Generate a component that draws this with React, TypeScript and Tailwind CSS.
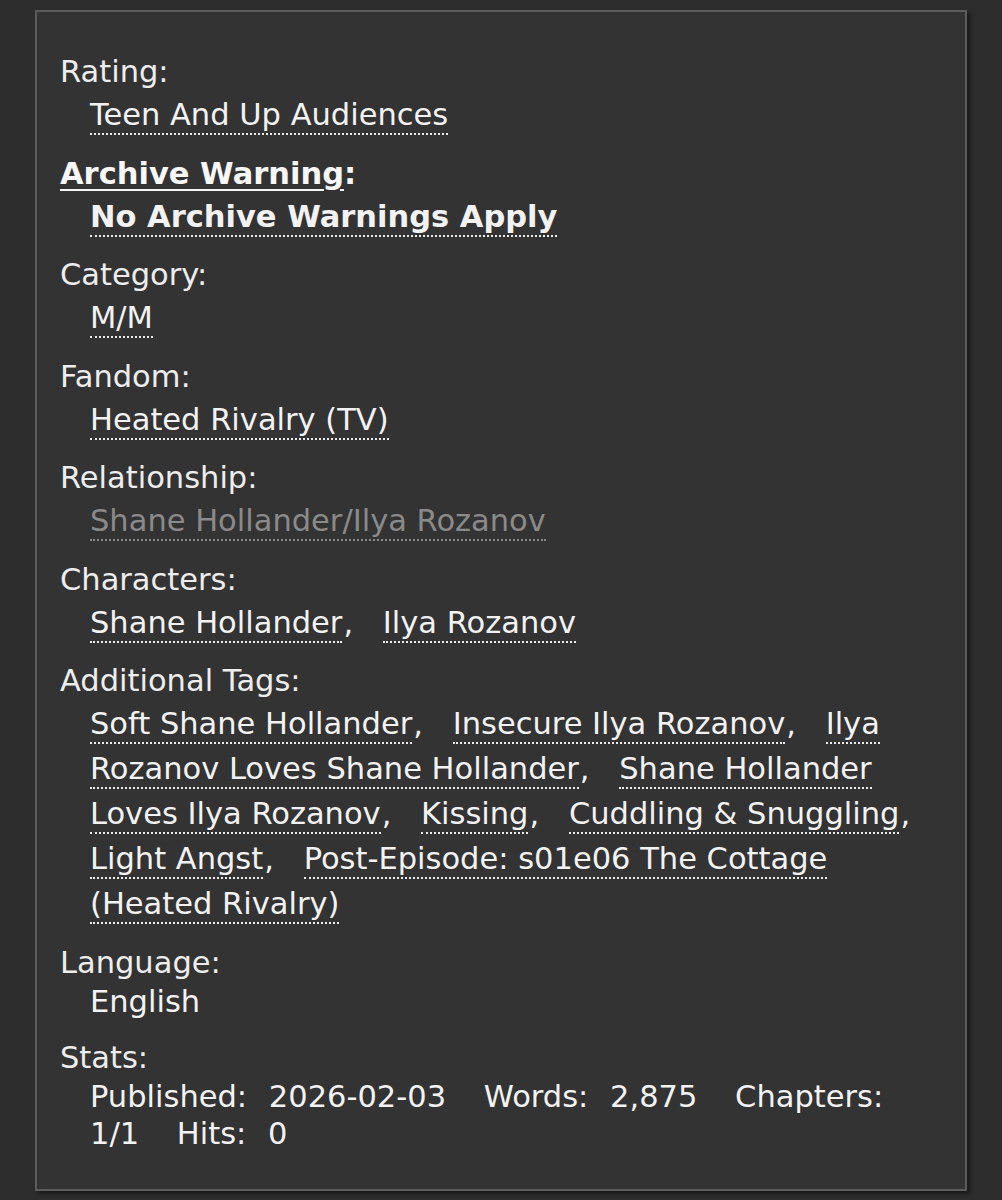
import React from "react";

const font = { fontFamily: '"DejaVu Sans", Verdana, sans-serif' };

function Tag({ children, gray = false, bold = false }: { children: React.ReactNode; gray?: boolean; bold?: boolean }) {
  return (
    <span
      className={
        "border-b-2 border-dotted pb-[1px] " +
        (gray ? "text-[#8a8a8a] border-[#8a8a8a] " : "text-[#f2f2f2] border-[#ececec] ") +
        (bold ? "font-bold" : "")
      }
    >
      {children}
    </span>
  );
}

function TagList({ items }: { items: string[] }) {
  return (
    <>
      {items.map((t, i) => (
        <React.Fragment key={i}>
          <Tag>{t}</Tag>
          {i < items.length - 1 ? <span className="ml-[1px] mr-[20px]">,</span> : null}{" "}
        </React.Fragment>
      ))}
    </>
  );
}

function Label({ children }: { children: React.ReactNode }) {
  return <div className="leading-[40px] text-[#ededed]">{children}</div>;
}

function Value({ children, tight = false }: { children: React.ReactNode; tight?: boolean }) {
  return <div className={"pl-[30px] text-[#f2f2f2] " + (tight ? "leading-[37px]" : "leading-[45px]")}>{children}</div>;
}

export default function App() {
  return (
    <div className="min-h-[1200px] bg-[#2d2d2d] pt-[10px] pb-[8px]" style={font}>
      <div className="mx-[35px] border-2 border-[#5c5c5c] bg-[#333333] pl-[23px] pr-[32px] pt-[40px] pb-[37px] text-[30.5px] shadow-[3px_3px_4px_rgba(0,0,0,0.45)]">
        <div className="flex flex-col gap-[16.5px]">
          <div>
            <Label>Rating:</Label>
            <Value>
              <Tag>Teen And Up Audiences</Tag>
            </Value>
          </div>
          <div>
            <Label>
              <span className="font-bold text-[#f7f7f7]">
                <span className="underline decoration-2 underline-offset-[5px]">Archive Warning</span>:
              </span>
            </Label>
            <Value>
              <Tag bold>No Archive Warnings Apply</Tag>
            </Value>
          </div>
          <div>
            <Label>Category:</Label>
            <Value>
              <Tag>M/M</Tag>
            </Value>
          </div>
          <div>
            <Label>Fandom:</Label>
            <Value>
              <Tag>Heated Rivalry (TV)</Tag>
            </Value>
          </div>
          <div>
            <Label>Relationship:</Label>
            <Value>
              <Tag gray>Shane Hollander/Ilya Rozanov</Tag>
            </Value>
          </div>
          <div>
            <Label>Characters:</Label>
            <Value>
              <TagList items={["Shane Hollander", "Ilya Rozanov"]} />
            </Value>
          </div>
          <div>
            <Label>Additional Tags:</Label>
            <Value>
              <TagList
                items={[
                  "Soft Shane Hollander",
                  "Insecure Ilya Rozanov",
                  "Ilya Rozanov Loves Shane Hollander",
                  "Shane Hollander Loves Ilya Rozanov",
                  "Kissing",
                  "Cuddling & Snuggling",
                  "Light Angst",
                  "Post-Episode: s01e06 The Cottage (Heated Rivalry)",
                ]}
              />
            </Value>
          </div>
          <div>
            <Label>Language:</Label>
            <Value tight>English</Value>
          </div>
          <div className="mt-[2px]">
            <Label>Stats:</Label>
            <Value tight>
              <span className="mr-[12px]">Published:</span>{" "}
              <span className="mr-[28px]">2026-02-03</span>{" "}
              <span className="mr-[12px]">Words:</span>{" "}
              <span className="mr-[28px]">2,875</span>{" "}
              <span className="mr-[12px]">Chapters:</span>{" "}
              <span className="mr-[28px]">1/1</span>{" "}
              <span className="mr-[12px]">Hits:</span>{" "}
              <span>0</span>
            </Value>
          </div>
        </div>
      </div>
    </div>
  );
}
